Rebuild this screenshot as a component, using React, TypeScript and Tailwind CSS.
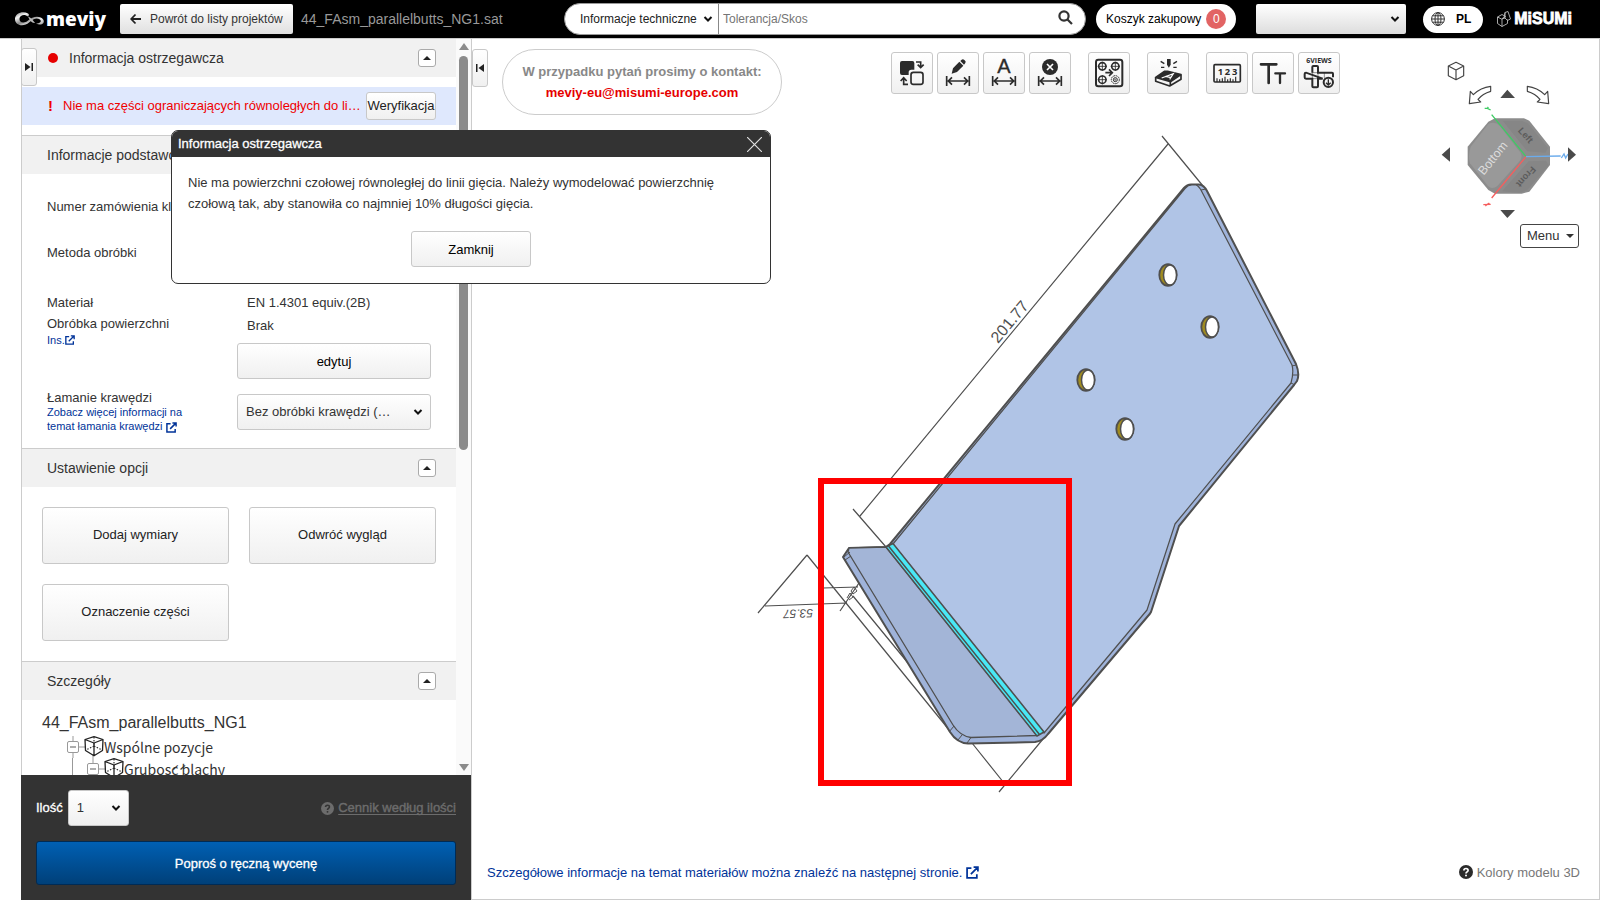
import React from "react";

const BTN = "rounded-[3px] border border-[#c8c8c8] bg-linear-to-b from-white to-[#f0f0f0]";

function Chevron() {
  return (
    <svg className="pointer-events-none h-2 w-2.5" viewBox="0 0 10 8" fill="none" stroke="#111" strokeWidth="2">
      <path d="M1.5 2 L5 5.5 L8.5 2" />
    </svg>
  );
}

function ExternalIcon({ className }: { className: string }) {
  return (
    <svg className={className} viewBox="0 0 12 12" fill="none" stroke="currentColor" strokeWidth="1.6">
      <path d="M5 2 H1 V11 H10 V7.5 M4.5 7.5 L10.5 1.5 M7 1 H11 V5" />
    </svg>
  );
}

function HelpIcon({ className, mark }: { className: string; mark: string }) {
  return (
    <svg className={className} viewBox="0 0 14 14">
      <circle cx="7" cy="7" r="7" fill="currentColor" />
      <path d="M4.9 5.4 C4.9 2.9 9.2 2.9 9.1 5.3 C9.1 6.9 7 6.8 7 8.5" fill="none" stroke={mark} strokeWidth="1.7" />
      <circle cx="7" cy="10.6" r="1" fill={mark} />
    </svg>
  );
}

function Header() {
  return (
    <header className="flex h-[39px] shrink-0 items-center border-b border-[#ccc] bg-black pr-7 pl-[14px]">
      <div className="flex w-[106px] items-center">
        <svg className="h-5 w-8 shrink-0" viewBox="0 0 32 20">
          <defs>
            <linearGradient id="swirl" x1="0" y1="0" x2="1" y2="1">
              <stop offset="0" stopColor="#777" />
              <stop offset="0.25" stopColor="#f4f4f4" />
              <stop offset="0.5" stopColor="#888" />
              <stop offset="0.7" stopColor="#eee" />
              <stop offset="1" stopColor="#999" />
            </linearGradient>
          </defs>
          <path d="M14 4.5 C9 1.5 1 4 1 10 C1 17 10 18 15 13.5 C20 9 23 8.5 26 10.5 C28 12.5 26 14.5 22 14.5 C27 17 31 14.5 29.5 11 C27 6.500 19 6.500 14 11.500 C10 15 5 13.500 5.500 9.500 C6 6 10.500 4.500 14 7.500 C15 6.500 15.500 5.500 14 4.500 Z" fill="url(#swirl)" />
          <path d="M14 7.500 C17 8.500 18.500 11 21 14 C18 14.500 16 12 14 7.500 Z" fill="#bbb" />
        </svg>
        <span className="font-['Open_Sans'] text-[19px] leading-5 font-extrabold text-white">meviy</span>
      </div>
      <button className="flex h-[30px] w-[173px] items-center rounded-[2px] bg-linear-to-b from-white to-[#e0e0e0] pl-[10px] text-[12px] text-[#333]">
        <svg className="mr-2 h-3 w-3" viewBox="0 0 12 12" fill="none" stroke="#222" strokeWidth="1.8">
          <path d="M11 6 H1.500 M5.500 1.500 L1.200 6 L5.500 10.500" />
        </svg>
        Powrót do listy projektów
      </button>
      <span className="ml-2 text-[14px] text-[#999]">44_FAsm_parallelbutts_NG1.sat</span>
      <div className="min-w-4 flex-1" />
      <form className="flex h-8 w-[522px] items-center rounded-full border border-[#999] bg-white" onSubmit={(e) => e.preventDefault()}>
        <div className="relative flex h-full w-[154px] items-center border-r border-[#888]">
          <select aria-label="Kategoria" className="h-full w-full appearance-none pl-[15px] text-[12px] text-[#222]">
            <option>Informacje techniczne</option>
          </select>
          <span className="pointer-events-none absolute right-[5px] flex"><Chevron /></span>
        </div>
        <input aria-label="Szukaj" placeholder="Tolerancja/Skos" className="h-full min-w-0 flex-1 pl-1 text-[12px] placeholder:text-[#757575]" />
        <button aria-label="Szukaj" className="mr-3 mb-1 flex">
          <svg className="h-[15px] w-[15px]" viewBox="0 0 15 15" fill="none" stroke="#333" strokeWidth="2.200">
            <circle cx="6" cy="6" r="4.600" />
            <path d="M9.500 9.500 L14 14" />
          </svg>
        </button>
      </form>
      <button className="ml-[10px] flex h-[30px] w-[140px] items-center gap-[5px] rounded-full bg-white pl-[10px] text-[12px] text-black">
        Koszyk zakupowy
        <span className="flex h-5 w-5 items-center justify-center rounded-full bg-[#e26464] text-[12px] text-white">0</span>
      </button>
      <div className="relative ml-5 flex h-[30px] w-[150px] items-center">
        <select aria-label="Konto" className="h-full w-full appearance-none rounded-[2px] bg-linear-to-b from-white to-[#ddd]">
          <option></option>
        </select>
        <span className="pointer-events-none absolute right-[6px] flex"><Chevron /></span>
      </div>
      <button className="ml-[17px] flex h-[27px] w-[60px] items-center gap-[11px] rounded-full bg-white pl-2 text-[12px] font-bold text-black">
        <svg className="h-[14px] w-[14px]" viewBox="0 0 14 14" fill="none" stroke="#333" strokeWidth="1">
          <circle cx="7" cy="7" r="6.400" />
          <ellipse cx="7" cy="7" rx="3" ry="6.400" />
          <path d="M7 0.500 V13.500 M0.500 7 H13.500 M1.500 3.800 H12.500 M1.500 10.200 H12.500" />
        </svg>
        PL
      </button>
      <div className="ml-[14px] flex w-[75px] items-center justify-between">
        <svg className="h-4 w-[14px]" viewBox="0 0 14 16" fill="none" stroke="#bbb" strokeWidth="0.900">
          <path d="M0.500 6 L5 3.500 L8.500 5.500 L4.500 8 Z M0.500 6 V12.500 L5 15.500 V8 M5 15.500 L10.500 12.500 V8.500 M8 1.500 L11 0.500 L13.500 8 L10.500 9.500 L8 7 Z M8 1.500 L7 7 M5 8 L8 7" />
        </svg>
        <span className="text-[16px] leading-5 font-bold text-white [-webkit-text-stroke:0.8px_white]">MiSUMi</span>
      </div>
    </header>
  );
}

function SectionHeader({ title, dot }: { title: string; dot?: boolean }) {
  return (
    <div className="flex h-[38px] items-center bg-[#f1f1f1] pr-5 pl-[25px]">
      {dot && <span className="mr-[11px] ml-px h-[10px] w-[10px] rounded-full bg-[#e60000]" />}
      <h2 className="flex-1 text-[14px] text-[#333]">{title}</h2>
      <button aria-label={title} className="flex h-[18px] w-[18px] items-center justify-center rounded-[3px] border border-[#aaa] bg-white">
        <svg className="h-1 w-2" viewBox="0 0 8 4"><path d="M0 4 L4 0 L8 4 Z" fill="#222" /></svg>
      </button>
    </div>
  );
}

function TreeNode({ label, last }: { label: string; last?: boolean }) {
  return (
    <>
      <svg className="h-[22px] w-[37px] shrink-0" viewBox="0 0 37 22" fill="none">
        <path d={last ? "M6 0 V5 M12 11 H18 M6 17 V22" : "M6 -2 V5 M12 11 H18 M6 17 V22 M26 18 V22"} stroke="#999" />
        <rect x="0.500" y="5.500" width="11" height="11" rx="1.500" stroke="#999" />
        <path d="M3 11 H9" stroke="#777" strokeWidth="1.200" />
        <g stroke="#222" strokeWidth="1.300" strokeLinejoin="round">
          <path d="M18 3.500 L27 0.700 L36 3.500 L35.500 14.500 L27 19.800 L18.500 14.500 Z M18 3.500 L27 7 L36 3.500 M27 7 V19.800" />
          <path d="M27 1 V10 L19 14 M27 10 L35 14" strokeWidth="1.100" strokeDasharray="1.500 1.500" />
        </g>
      </svg>
      <span className="font-['Noto_Sans_CJK_JP','Noto_Sans',sans-serif] text-[14px] leading-[22px] text-[#333]">{label}</span>
    </>
  );
}

function Sidebar() {
  return (
    <aside className="ml-[21px] flex w-[451px] shrink-0 flex-col border-x border-[#ccc] bg-white">
      <div className="flex min-h-0 flex-1">
        <div className="flex min-w-0 flex-1 flex-col overflow-hidden">
          <section className="shrink-0 pb-[10px]">
            <SectionHeader title="Informacja ostrzegawcza" dot />
            <div className="mt-[10px] flex h-[38px] items-center bg-[#dfe8fd] pr-5 pl-[25px] text-[13px] text-[#f00000]">
              <span className="w-4 pl-px text-[15px] font-bold">!</span>
              <p className="min-w-0 flex-1 whitespace-nowrap">Nie ma części ograniczających równoległych do li…</p>
              <button className="ml-1 h-7 w-[70px] rounded-[3px] border border-[#c8c8c8] bg-linear-to-b from-white to-[#f0f0f0] text-[#222]">Weryfikacja</button>
            </div>
          </section>

          <section className="shrink-0 border-t border-[#ccc] pb-[14px] text-[13px] text-[#333]">
            <SectionHeader title="Informacje podstawowe" />
            <div className="pt-[11px] pr-[25px] pl-[25px]">
              <p className="h-[45px] leading-[44px]">Numer zamówienia klienta</p>
              <p className="h-[45px] leading-[46px]">Metoda obróbki</p>
              <div className="mt-4 flex">
                <div className="w-[190px] pt-px leading-[21px]">
                  <p>Materiał</p>
                  <p>Obróbka powierzchni</p>
                  <a href="#ins" className="flex items-center text-[11px] leading-3 text-[#003399]">
                    Ins.<ExternalIcon className="h-[10px] w-[10px]" />
                  </a>
                </div>
                <div className="flex-1 leading-[23px]">
                  <p className="pl-[10px]">EN 1.4301 equiv.(2B)</p>
                  <p className="pl-[10px]">Brak</p>
                  <button className="mt-[6px] h-9 w-full rounded-[3px] border border-[#c8c8c8] bg-linear-to-b from-white to-[#f0f0f0] text-black">edytuj</button>
                </div>
              </div>
              <div className="mt-[11px] flex h-11">
                <div className="w-[190px]">
                  <label htmlFor="edge" className="block leading-[15px]">Łamanie krawędzi</label>
                  <a href="#edge-info" className="block w-[150px] text-[11px] leading-[14px] text-[#003399]">
                    Zobacz więcej informacji na temat łamania krawędzi <ExternalIcon className="inline h-[11px] w-[11px]" />
                  </a>
                </div>
                <div className="relative mt-1 flex h-9 flex-1 items-center">
                  <select id="edge" className={`${BTN} h-full w-full appearance-none pl-2 text-[13px]`}>
                    <option>Bez obróbki krawędzi (…</option>
                  </select>
                  <span className="pointer-events-none absolute right-2 flex"><Chevron /></span>
                </div>
              </div>
            </div>
          </section>

          <section className="shrink-0 border-t border-[#ccc]">
            <SectionHeader title="Ustawienie opcji" />
            <div className="grid grid-cols-2 gap-5 p-5 text-[13px] text-[#222]">
              <button className={`${BTN} h-[57px] pb-0.5`}>Dodaj wymiary</button>
              <button className={`${BTN} h-[57px] pb-0.5`}>Odwróć wygląd</button>
              <button className={`${BTN} h-[57px] pb-0.5`}>Oznaczenie części</button>
            </div>
          </section>

          <section className="shrink-0 border-t border-[#ccc]">
            <SectionHeader title="Szczegóły" />
            <div className="pt-[11px] pl-5">
              <p className="mb-px text-[16px] leading-6 text-[#333]">44_FAsm_parallelbutts_NG1</p>
              <ul>
                <li className="flex pl-[25px]"><TreeNode label="Wspólne pozycje" /></li>
                <li className="flex pl-[31px]">
                  <span className="-ml-px mr-[14px] h-[22px] border-l border-[#999]" />
                  <TreeNode label="Grubość blachy" last />
                </li>
              </ul>
            </div>
          </section>
        </div>
        <div className="flex w-[15px] flex-col items-center bg-[#fafafa] py-1 text-[#8b8b8b]">
          <svg className="h-2 w-[10px]" viewBox="0 0 10 8"><path d="M0 7 L5 0 L10 7 Z" fill="currentColor" /></svg>
          <div className="mt-[5px] h-[394px] w-[9px] rounded-full bg-[#8b8b8b]" />
          <div className="flex-1" />
          <svg className="h-2 w-[10px]" viewBox="0 0 10 8"><path d="M0 1 L5 8 L10 1 Z" fill="currentColor" /></svg>
        </div>
      </div>

      <div className="-ml-px shrink-0 bg-[#333] px-[15px] pt-[15px] pb-[15px] text-[13px]">
        <div className="flex items-center">
          <label htmlFor="qty" className="mr-[5px] text-white [-webkit-text-stroke:0.3px_white]">Ilość</label>
          <div className="relative flex h-9 w-[61px] items-center">
            <select id="qty" className={`${BTN} h-full w-full appearance-none pl-2 text-[#333]`}>
              <option>1</option>
            </select>
            <span className="pointer-events-none absolute right-2 flex"><Chevron /></span>
          </div>
          <a href="#cennik" className="ml-auto flex items-center gap-1 text-[#6c6c6c]">
            <HelpIcon className="h-[13px] w-[13px]" mark="#333" />
            <span className="underline underline-offset-2 [-webkit-text-stroke:0.4px_#6c6c6c]">Cennik według ilości</span>
          </a>
        </div>
        <button className="mt-[15px] h-11 w-full rounded-[3px] border border-[#002b55] bg-linear-to-b from-[#0060b4] to-[#004079] pt-0.5 text-[13px] text-white [-webkit-text-stroke:0.3px_white]">
          Poproś o ręczną wycenę
        </button>
      </div>
    </aside>
  );
}

const DIM = "M29 72 V102 M97 72 V102 M34 87 H92 M45 76 L34 87 L45 98 M81 76 L92 87 L81 98";

function Tool({ label, children }: { label: string; children: React.ReactNode }) {
  return (
    <button aria-label={label} className={`${BTN} h-[42px] w-[42px]`}>
      <svg className="h-10 w-10" viewBox="3 3 120 120" fill="none" stroke="#2b2b2b" strokeWidth="5">
        {children}
      </svg>
    </button>
  );
}

function Toolbar() {
  return (
    <div className="flex gap-[17px]">
      <div className="flex gap-1">
        <Tool label="Odwróć">
          <path d="M33 27 H64 Q70 27 70 33 V53 H61 Q53 53 53 61 V69 H33 Q27 69 27 63 V33 Q27 27 33 27 Z" fill="#2b2b2b" stroke="none" />
          <rect x="60" y="61" width="36" height="36" rx="7" />
          <path d="M75 30 H89 V45 M80 38 L89 47 L98 38 M51 97 H38 V78 M29 87 L38 77 L47 87" />
        </Tool>
        <Tool label="Edytuj wymiar">
          <path d={DIM} />
          <path d="M44 65 L48 49 L67 29 L79 41 L60 60 Z M70 27 L74 23 Q78 20 83 25 Q88 29 85 33 L81 38 Z" fill="#2b2b2b" stroke="none" />
        </Tool>
        <Tool label="Tekst wymiaru">
          <path d={DIM} />
          <text x="63" y="62" textAnchor="middle" fontFamily="Liberation Sans" fontSize="60" fill="#2b2b2b" strokeWidth="1">A</text>
        </Tool>
        <Tool label="Usuń wymiar">
          <path d={DIM} />
          <circle cx="63" cy="45" r="24" fill="#2b2b2b" stroke="none" />
          <path d="M54 36 L72 54 M72 36 L54 54" stroke="#fff" />
        </Tool>
      </div>
      <Tool label="Otwory">
        <rect x="24" y="23" width="79" height="80" rx="7" strokeWidth="6" />
        <g strokeWidth="5">
          <circle cx="43" cy="43" r="11" /><circle cx="82" cy="43" r="11" /><circle cx="43" cy="83" r="11" />
          <path d="M43 29 V57 M29 43 H57 M82 29 V57 M68 43 H96 M43 69 V97 M29 83 H57" strokeWidth="2.500" />
          <circle cx="82" cy="83" r="12" strokeWidth="3" strokeDasharray="5 2" />
          <circle cx="82" cy="83" r="6" strokeWidth="3" />
          <circle cx="82" cy="83" r="2" strokeWidth="2" />
        </g>
        <path d="M52 62 H72 M63 52 L73 62 L63 72" />
      </Tool>
      <Tool label="Grawerowanie">
        <path d="M26 76 L52 58 H62 L102 68 L71 89 Z" fill="#2b2b2b" strokeLinejoin="round" />
        <path d="M26 76 V88 L68 102 L102 82 V68 M70 89 V101" strokeLinejoin="round" />
        <path d="M44 78 L79 65 L68 82 M56 73 L72 77" stroke="#fff" strokeWidth="3.500" />
        <path d="M60 21 H71 V38 L65.500 47 L60 38 Z" fill="#2b2b2b" stroke="none" />
        <path d="M41 28 L52 35 M42 46 H52 M90 28 L79 35 M89 46 H79" strokeWidth="4" />
      </Tool>
      <div className="flex gap-1">
        <Tool label="Jednostki">
          <rect x="24" y="38" width="79" height="52" rx="3" />
          <path d="M33 90 V79 M41 90 V82 M49 90 V79 M57 90 V74 M65 90 V82 M73 90 V79 M81 90 V82 M89 90 V74" strokeWidth="3.500" />
          <g textAnchor="middle" fontFamily="Open Sans" fontSize="28" fontWeight="700" fill="#2b2b2b" stroke="none">
            <text x="43" y="69">1</text>
            <text x="64" y="69">2</text>
            <text x="86" y="69">3</text>
          </g>
        </Tool>
        <Tool label="Rozmiar tekstu">
          <path d="M27 37 H73 M50 37 V93" strokeWidth="8" strokeLinecap="round" />
          <path d="M70 64 H99 M84 64 V93" strokeWidth="7" strokeLinecap="round" />
        </Tool>
        <Tool label="Sześć widoków">
          <text x="63" y="33" textAnchor="middle" fontFamily="Open Sans" fontSize="21" fontWeight="700" fill="#2b2b2b" stroke="none">6VIEWS</text>
          <path d="M43 62 V45 Q43 42 46 42 H57 Q60 42 60 45 V62 H102 Q105 62 105 65 V76 M74 80 H60 V103 Q60 106 57 106 H46 Q43 106 43 103 V80 H24 Q20 80 20 76 V66 Q20 62 24 62 Z" strokeWidth="6" />
          <path d="M43 62 H60 V80 H43 Z M79 62 V78" strokeWidth="1.500" />
          <circle cx="91" cy="91" r="14" strokeWidth="6" />
          <path d="M91 82 V99 M84 92 L91 99 L98 92" strokeWidth="4" />
        </Tool>
      </div>
    </div>
  );
}

function Hole({ x, y }: { x: number; y: number }) {
  return (
    <g stroke="#4f4f4f">
      <ellipse cx={x} cy={y} rx="8.700" ry="10.800" fill="#a08c20" strokeWidth="1.800" />
      <ellipse cx={x + 2} cy={y} rx="6.500" ry="10" fill="#fff" strokeWidth="1.500" />
    </g>
  );
}

function Model() {
  return (
    <svg className="absolute inset-0 h-full w-full" viewBox="472 39 1127 860" fill="none" stroke="#4f4f4f" strokeLinejoin="round">
      <path strokeWidth="1.200" d="M1168 144 L860 516 M1162 136 L1203 186 M853 509 L886 547 M807 555 L758 613 M807 555 L950 731 M765 606 L847 603 M840 611 L859 583 M823 588 L858 587 M853 596 L908 663 M972 743 L1004 783 M1043 739 L999 792" />
      <path fill="#9fb3da" strokeWidth="2" d="M890 544 L1184 188 Q1187 184.500 1191 184.500 H1199 Q1204 185 1207 191 L1296 364 Q1300 374 1297 381 L1294 385 L1179 526 L1151 612 Q1150 614 1148 616 L1048 734 Q1043 741 1035 742 L968 743.500 Q957 743 950 732 L843 557 L849 548 L886 547 Z" />
      <path fill="#b0c4e6" strokeWidth="1.200" d="M893 544 L1185 188.500 Q1188 185 1192 185 H1196 Q1199 186 1202 192 L1292 365 Q1294 372 1291 383 L1175 524 L1147 610 L1044 733 Z" />
      <path fill="#a3b5d7" strokeWidth="1.300" d="M849 548 L886 547 L1037 735.500 L971 737.500 Q960 736 953 725 L848 552 Z" />
      <path fill="#49e8f5" strokeWidth="1.500" d="M886 547 L893 543.500 L1044 732 L1037 736 Z" />
      <path strokeWidth="1.500" d="M888.500 546 L1039.500 734.500" />
      <path strokeWidth="1" d="M844 557 L850 552 M845 560 L851 556 M949 732 L954 726 M958 740 L962 735 M967 743 L971 737.500 M1292 366 L1296 365 M1293 375 L1298 375 M1291 383 L1295 385 M1201 190 L1206 189" />
      <Hole x={1168} y={275} />
      <Hole x={1210} y={327} />
      <Hole x={1086} y={380} />
      <Hole x={1125} y={429} />
      <g fill="#4f4f4f" stroke="none" fontFamily="Liberation Sans">
        <text transform="translate(998 344) rotate(-50)" fontSize="16">201.77</text>
        <text transform="translate(813 609) rotate(178)" fontSize="12" fontStyle="italic">53.57</text>
      </g>
      <path strokeWidth="1" d="M847 598 L850 593 L853 597 L849 600 M851 591 L854 587 L857 591 L853 594 Z" />
      <rect x="821" y="481" width="248" height="302" stroke="#f00" strokeWidth="6" strokeLinejoin="miter" />
    </svg>
  );
}

function ViewCube() {
  return (
    <svg className="h-[165px] w-[150px]" viewBox="60 30 450 495" fill="none">
      <g stroke="#444" strokeWidth="3.500" strokeLinejoin="round">
        <path d="M108 37 L131 48 V77 L108 89 L85 77 V48 Z M85 48 L108 60 L131 48 M108 60 V89" />
        <path d="M212 109 V124 Q188 131 174 148 L182 156 L148 161 L151 124 L160 134 Q182 112 212 109 Z M322 109 V124 Q346 131 360 148 L352 156 L386 161 L383 124 L374 134 Q352 112 322 109 Z" />
      </g>
      <path d="M241 144 L262 119 L285 144 Z M241 480 H285 L262 504 Z M90 292 V335 L65 314 Z" fill="#4a4a4a" />
      <path d="M225 205 H312 L328 212 L390 290 V345 L328 425 L305 431 H225 L205 420 L143 345 V290 L205 215 Z" fill="#8c8c8c" />
      <path d="M205 222 Q225 212 240 228 L302 308 Q308 320 300 332 L232 408 Q216 420 204 408 L150 340 Q143 318 152 290 Z" fill="#999" />
      <path d="M248 212 H304 L324 220 L384 294 L376 308 L322 304 Z M326 334 L378 332 L386 346 L322 420 L300 428 L246 424 Z" fill="#868686" />
      <g fontFamily="Liberation Sans" fontSize="37" textAnchor="middle" fill="#dcdcdc">
        <text transform="translate(228 332) rotate(-51)">Bottom</text>
        <g fontSize="28" fontWeight="700" fill="#5c5c5c">
          <text transform="translate(310 262) rotate(48)">Left</text>
          <text transform="translate(311 374) rotate(132)">Front</text>
        </g>
      </g>
      <path d="M318 320 L215 194 M194 175 L202 175 L212 180 M202 175 L205 171" stroke="#3ecb64" strokeWidth="4" />
      <path d="M318 320 L215 444 M190 464 L212 463 M196 468 L208 459" stroke="#f55e5e" strokeWidth="4" />
      <path d="M318 320 L422 318 M424 324 L432 312 L437 324 L444 312" stroke="#6cacec" strokeWidth="4" />
      <path d="M444 292 V335 L468 314 Z" fill="#4a4a4a" />
    </svg>
  );
}

function Viewer() {
  return (
    <main className="relative flex min-w-0 flex-1 flex-col justify-between border-r border-b border-[#ccc]">
      <Model />
      <div className="relative flex items-start">
        <button aria-label="Zwiń panel" className={`${BTN} mt-[10px] flex h-[38px] w-4 items-center justify-center`}>
          <svg className="h-2 w-2" viewBox="0 0 8 8"><path d="M0 0 H1.500 V8 H0 Z M8 0 V8 L2.500 4 Z" fill="#222" /></svg>
        </button>
        <div className="mt-[10px] ml-[14px] flex h-[66px] w-[280px] flex-col justify-center rounded-full border border-[#ccc] bg-white text-center text-[13px] leading-[21px] font-bold">
          <p className="text-[#888]">W przypadku pytań prosimy o kontakt:</p>
          <a href="mailto:meviy-eu@misumi-europe.com" className="text-[#e60000]">meviy-eu@misumi-europe.com</a>
        </div>
        <div className="mt-[13px] ml-auto"><Toolbar /></div>
        <div className="mt-[21px] ml-[100px] flex w-[159px] flex-col items-start">
          <ViewCube />
          <button className="-mt-px ml-[80px] flex h-6 w-[59px] items-center gap-[6px] rounded-[3px] border border-[#444] bg-white pl-[6px] text-[13px] text-[#333]">
            Menu
            <svg className="h-1 w-2" viewBox="0 0 8 4"><path d="M0 0 L4 4 L8 0 Z" fill="#333" /></svg>
          </button>
        </div>
      </div>
      <div className="relative flex items-center justify-between pr-[19px] pb-[17px] pl-[15px] text-[13px]">
        <a href="#materials" className="flex items-center gap-1 text-[#003399]">
          Szczegółowe informacje na temat materiałów można znaleźć na następnej stronie.
          <ExternalIcon className="h-[13px] w-[13px]" />
        </a>
        <a href="#colors" className="flex items-center gap-1 text-[#777]">
          <HelpIcon className="h-[14px] w-[14px] text-[#2b2b2b]" mark="#fff" />
          Kolory modelu 3D
        </a>
      </div>
    </main>
  );
}

function WarningDialog() {
  return (
    <div role="dialog" aria-labelledby="warning-title" className="absolute top-[130px] left-[171px] h-[154px] w-[600px] overflow-hidden rounded-[7px] border border-[#333] bg-white text-[13px]">
      <div className="flex h-[26px] items-center justify-between bg-[#333] pr-2 pl-[6px] text-white">
        <h2 id="warning-title" className="[-webkit-text-stroke:0.3px_white]">Informacja ostrzegawcza</h2>
        <button aria-label="Zamknij okno">
          <svg className="h-[15px] w-[15px]" viewBox="0 0 15 15" stroke="#ddd" strokeWidth="1.200"><path d="M0 0 L15 15 M15 0 L0 15" /></svg>
        </button>
      </div>
      <p className="px-4 pt-[15px] leading-[21px] text-[#333]">
        Nie ma powierzchni czołowej równoległej do linii gięcia. Należy wymodelować powierzchnię czołową tak, aby stanowiła co najmniej 10% długości gięcia.
      </p>
      <button className={`${BTN} mx-auto mt-[17px] block h-9 w-[120px] pt-0.5 text-black`}>Zamknij</button>
    </div>
  );
}

export default function App() {
  return (
    <div className="relative flex h-screen flex-col overflow-hidden bg-white font-['Liberation_Sans',Arial,sans-serif]">
      <Header />
      <div className="flex min-h-0 flex-1">
        <Sidebar />
        <Viewer />
      </div>
      <button aria-label="Rozwiń panel" className={`${BTN} absolute top-12 left-[21px] flex h-[38px] w-4 items-center justify-center`}>
        <svg className="h-2 w-2" viewBox="0 0 8 8"><path d="M0 0 V8 L5.500 4 Z M6.500 0 H8 V8 H6.500 Z" fill="#222" /></svg>
      </button>
      <WarningDialog />
    </div>
  );
}
